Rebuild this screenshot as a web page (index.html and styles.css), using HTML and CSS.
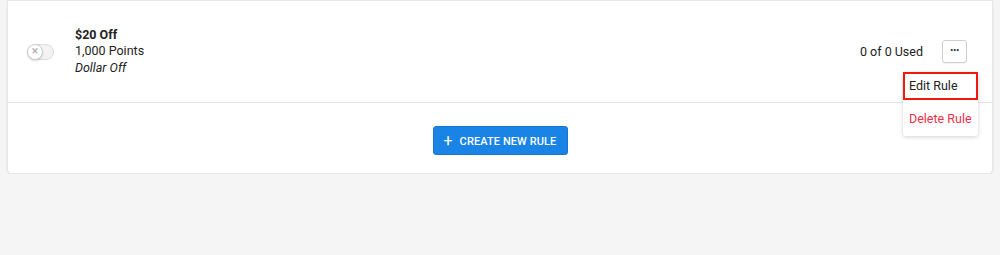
FILE: index.html
```html
<!DOCTYPE html>
<html>
<head>
    <link rel="stylesheet" href="styles.css">
</head>
<body>
    <div class="card">
        <div class="rule-row">
            <div class="toggle">
                <span class="knob">&times;</span>
            </div>
            <div class="rule-info">
                <div class="rule-title">$20 Off</div>
                <div>1,000 Points</div>
                <div class="rule-type">Dollar Off</div>
            </div>
            <div class="rule-usage">0 of 0 Used</div>
            <button class="more-btn">&middot;&middot;&middot;</button>

            <div class="menu">
                <div class="menu-item active">Edit Rule</div>
                <div class="menu-item danger">Delete Rule</div>
            </div>
        </div>
        <div class="card-footer">
            <button class="create-btn"><span class="plus">+</span> CREATE NEW RULE</button>
        </div>
    </div>
</body>
</html>
```

FILE: styles.css
```css
body {
    margin: 0;
    padding: 0;
    background-color: #f4f5f4;
    font-family: Roboto, "Liberation Sans", sans-serif;
    font-size: 12.5px;
    color: #222;
}

.card {
    margin: 0 7px;
    background-color: #fff;
    border: 1px solid #e6e7e6;
    border-top-color: #eaeaea;
    border-radius: 0 0 5px 5px;
    box-shadow: 0 1px 3px rgba(0, 0, 0, 0.08);
}

.rule-row {
    position: relative;
    display: flex;
    align-items: center;
    height: 101px;
    padding: 0 25px 0 19px;
    border-bottom: 1px solid #e4e5e4;
}

.toggle {
    width: 25px;
    height: 14px;
    border: 1px solid #dcdcdc;
    border-radius: 8px;
    background-color: #f3f3f3;
    position: relative;
    margin-top: 1px;
}

.knob {
    position: absolute;
    left: -1px;
    top: -1px;
    width: 14px;
    height: 14px;
    border: 1px solid #cfcfcf;
    border-radius: 50%;
    background-color: #fff;
    color: #aaa;
    font-size: 12px;
    line-height: 13px;
    text-align: center;
    box-shadow: 0 1px 2px rgba(0, 0, 0, 0.15);
}

.rule-info {
    margin-left: 21px;
    line-height: 16.5px;
    flex: 1;
}

.rule-title {
    font-weight: bold;
}

.rule-type {
    font-style: italic;
}

.rule-usage {
    margin-right: 19px;
}

.more-btn {
    width: 25px;
    height: 23px;
    border: 1px solid #cfcfcf;
    border-radius: 3px;
    background-color: #fff;
    color: #333;
    font-size: 12px;
    font-weight: bold;
    letter-spacing: -1px;
    padding: 0 0 4px 0;
    box-shadow: 0 1px 1px rgba(0, 0, 0, 0.05);
}

.menu {
    position: absolute;
    top: 71px;
    right: 14px;
    width: 75px;
    background-color: #fff;
    border-radius: 3px;
    box-shadow: 0 1px 4px rgba(0, 0, 0, 0.18);
    z-index: 2;
}

.menu-item {
    height: 24px;
    line-height: 24px;
    padding-left: 6px;
    font-size: 12.5px;
}

.menu-item.active {
    border: 2px solid #f3180e;
    padding-left: 4px;
}

.menu-item.danger {
    color: #f02f49;
    height: 36px;
    line-height: 38px;
}

.card-footer {
    display: flex;
    justify-content: center;
    padding: 23px 0 18px 0;
}

.create-btn {
    height: 29px;
    width: 135px;
    background-color: #1a84e6;
    color: #fff;
    border: 1px solid #1677d2;
    border-radius: 3px;
    font-family: Roboto, "Liberation Sans", sans-serif;
    font-size: 11px;
    font-weight: 500;
    letter-spacing: 0.1px;
}

.plus {
    font-size: 16px;
    font-weight: 400;
    margin-right: 4px;
    vertical-align: -1px;
}
```
